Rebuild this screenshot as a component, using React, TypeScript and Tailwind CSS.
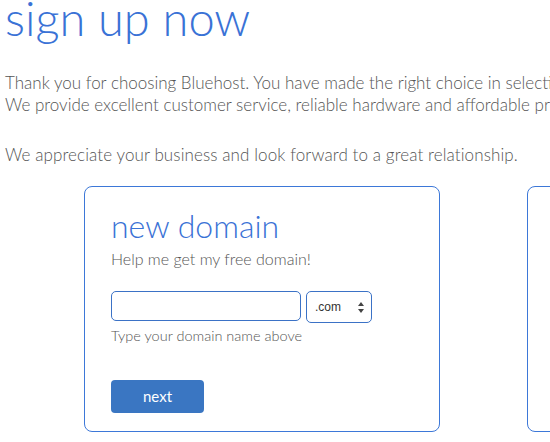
import { useState } from "react";

const DomainCard = () => {
  const [name, setName] = useState("");
  const [tld, setTld] = useState(".com");
  return (
    <div className="w-[356px] h-[246px] shrink-0 border border-[#3d78d8] rounded-[8px] pt-[21px] pl-[26px] bg-white">
      <h2 className="text-[32px] leading-[35px] font-light text-[#3a72d6]">new domain</h2>
      <p className="text-[16px] leading-[20px] font-light text-[#555] mt-[6px]">Help me get my free domain!</p>
      <div className="flex gap-[5px] mt-[22px]">
        <input
          className="w-[190px] h-[30px] border border-[#3b72c6] rounded-[5px] px-2 outline-none"
          value={name}
          onChange={(e) => setName(e.target.value)}
        />
        <div className="relative w-[66px] h-[32px] border border-[#3b72c6] rounded-[5px]">
          <select
            className="appearance-none w-full h-full bg-transparent pl-[8px] text-[12px] text-[#333] outline-none"
            style={{ fontFamily: "'Liberation Sans', Arial, sans-serif" }}
            value={tld}
            onChange={(e) => setTld(e.target.value)}
          >
            <option>.com</option>
            <option>.net</option>
            <option>.org</option>
          </select>
          <svg className="absolute right-[7px] top-[10px] pointer-events-none" width="6" height="11" viewBox="0 0 6 11">
            <path d="M3 0L6 4H0z" fill="#444" />
            <path d="M3 11L6 7H0z" fill="#444" />
          </svg>
        </div>
      </div>
      <p className="text-[14.5px] leading-[20px] font-light text-[#555] mt-[3px]">Type your domain name above</p>
      <button className="mt-[34px] w-[93px] h-[33px] rounded-[4px] bg-[#3a76c2] text-white text-[15px]">
        next
      </button>
    </div>
  );
};

const App = () => {
  return (
    <div
      className="w-[550px] h-[442px] overflow-hidden bg-white pl-[5px]"
      style={{ fontFamily: "Lato, 'Open Sans', sans-serif" }}
    >
      <h1 className="text-[47px] leading-[48px] font-light text-[#3a72d6] mt-[-6px] whitespace-nowrap">
        sign up now
      </h1>
      <div className="text-[17px] leading-[22px] font-light text-[#555] whitespace-nowrap mt-[30px]">
        <p>Thank you for choosing Bluehost. You have made the right choice in selecting us as your web host.</p>
        <p>We provide excellent customer service, reliable hardware and affordable pricing for all.</p>
        <p className="mt-[28px] tracking-[0.1px]">We appreciate your business and look forward to a great relationship.</p>
      </div>
      <div className="flex gap-[87px] ml-[79px] mt-[20px]">
        <DomainCard />
        <div className="w-[356px] h-[246px] shrink-0 border border-[#3d78d8] rounded-[8px] bg-white" />
      </div>
    </div>
  );
};

export default App;
